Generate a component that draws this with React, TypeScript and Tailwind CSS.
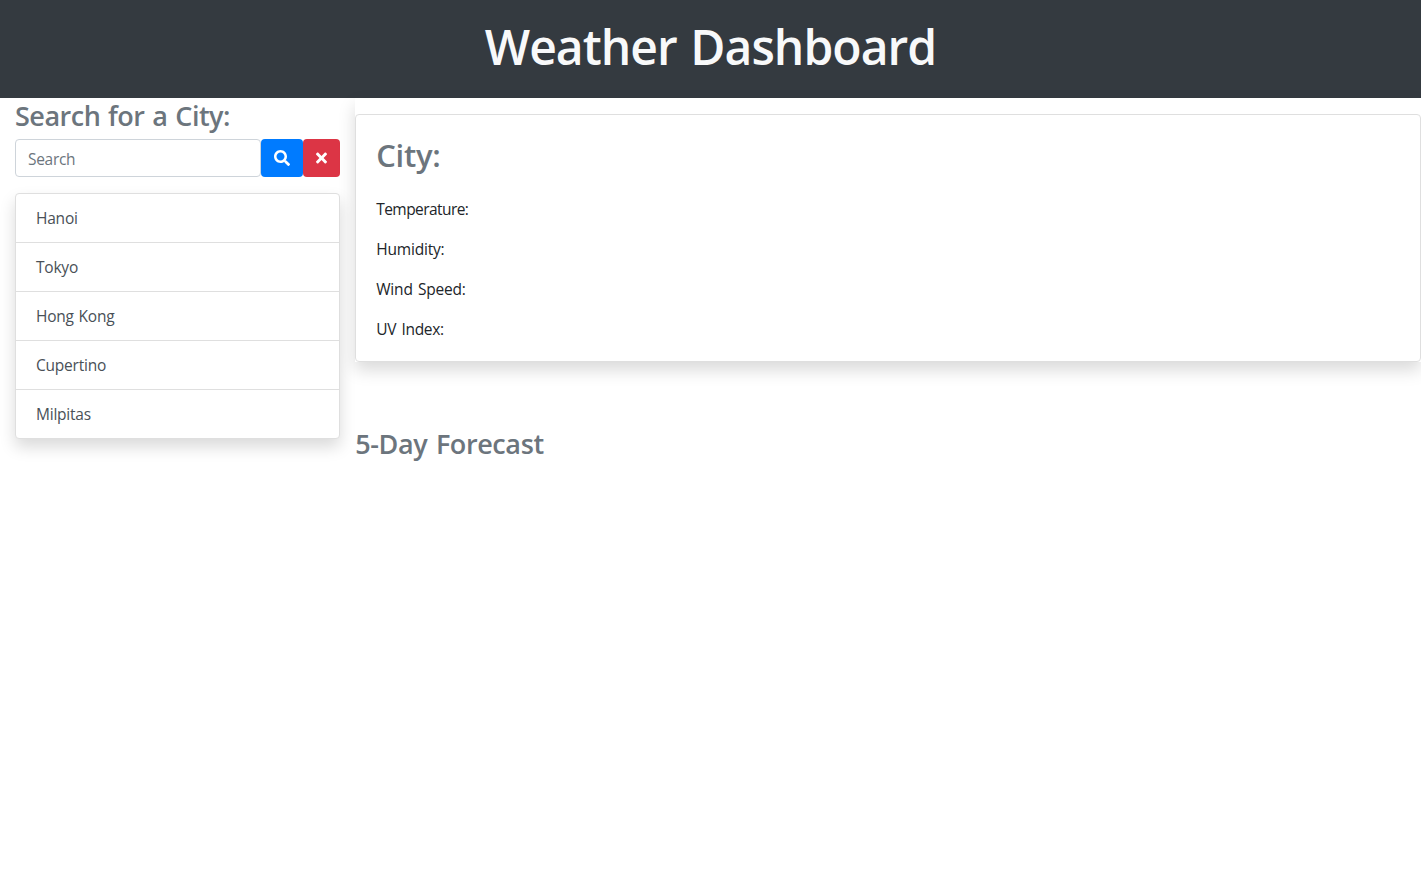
import { FaSearch, FaTimes } from "react-icons/fa";

const cities = ["Hanoi", "Tokyo", "Hong Kong", "Cupertino", "Milpitas"];
const readings = [
  { label: "Temperature:", tracking: "tracking-[-0.57px]" },
  { label: "Humidity:", tracking: "tracking-[-0.2px]" },
  { label: "Wind Speed:", tracking: "tracking-[-0.2px]" },
  { label: "UV Index:", tracking: "tracking-[-0.3px]" },
];

export default function App() {
  return (
    <div className="min-h-screen bg-white font-['Open_Sans','Noto_Sans',sans-serif] text-[15.5px] leading-6 text-[#212529]">
      <header className="flex h-[98px] justify-center bg-[#343a40] pt-[17px]">
        <h1 className="text-[48px] leading-[60px] font-semibold tracking-[-0.95px] whitespace-nowrap text-[#f8f9fa] [word-spacing:2px]">
          Weather Dashboard
        </h1>
      </header>
      <div className="flex">
        <aside className="w-1/4 px-[15px]">
          <h3 className="mb-[6px] pt-px text-[27px] leading-[34px] font-semibold tracking-[-0.5px] whitespace-nowrap text-[#6c757d] [word-spacing:1.3px]">
            Search for a City:
          </h3>
          <div className="mb-4 flex h-[38px]">
            <input
              type="text"
              placeholder="Search"
              className="min-w-0 flex-1 rounded-[4px] border border-[#ced4da] bg-white px-3 pt-[2px] tracking-[-0.3px] text-[#495057] placeholder:text-[#6c757d]"
            />
            <button aria-label="Search" className="flex w-[42px] items-center justify-center rounded-[4px] bg-[#007bff] text-white">
              <FaSearch className="size-4" />
            </button>
            <button aria-label="Clear" className="flex w-[37px] items-center justify-center rounded-[4px] bg-[#dc3545] text-white">
              <FaTimes className="h-4 w-[11px]" viewBox="0 0 352 512" />
            </button>
          </div>
          <ul className="divide-y divide-[#dfdfdf] rounded-[4px] border border-[#dfdfdf] bg-white shadow-[0_8px_16px_rgba(0,0,0,0.15)]">
            {cities.map((city) => (
              <li key={city} className="h-[49px] px-5 pt-3 tracking-[-0.22px] text-[#495057] [word-spacing:1px] last:h-12">
                {city}
              </li>
            ))}
          </ul>
        </aside>
        <main className="w-3/4">
          <div className="bg-white pt-4 shadow-[0_8px_16px_rgba(0,0,0,0.15)]">
            <section className="rounded-[4px] border border-[#dfdfdf] bg-white p-5">
              <h2 className="mb-[23px] pt-px text-[31px] leading-[38.4px] font-semibold tracking-[-0.3px] text-[#6c757d]">
                City:
              </h2>
              <div className="flex flex-col gap-4 [word-spacing:1.5px]">
                {readings.map(({ label, tracking }) => (
                  <p key={label} className={tracking}>
                    {label}
                  </p>
                ))}
              </div>
            </section>
          </div>
          <h3 className="mt-[65px] text-[27px] leading-[34px] font-semibold tracking-[-0.4px] text-[#6c757d] [word-spacing:2px]">
            5-Day Forecast
          </h3>
        </main>
      </div>
    </div>
  );
}
